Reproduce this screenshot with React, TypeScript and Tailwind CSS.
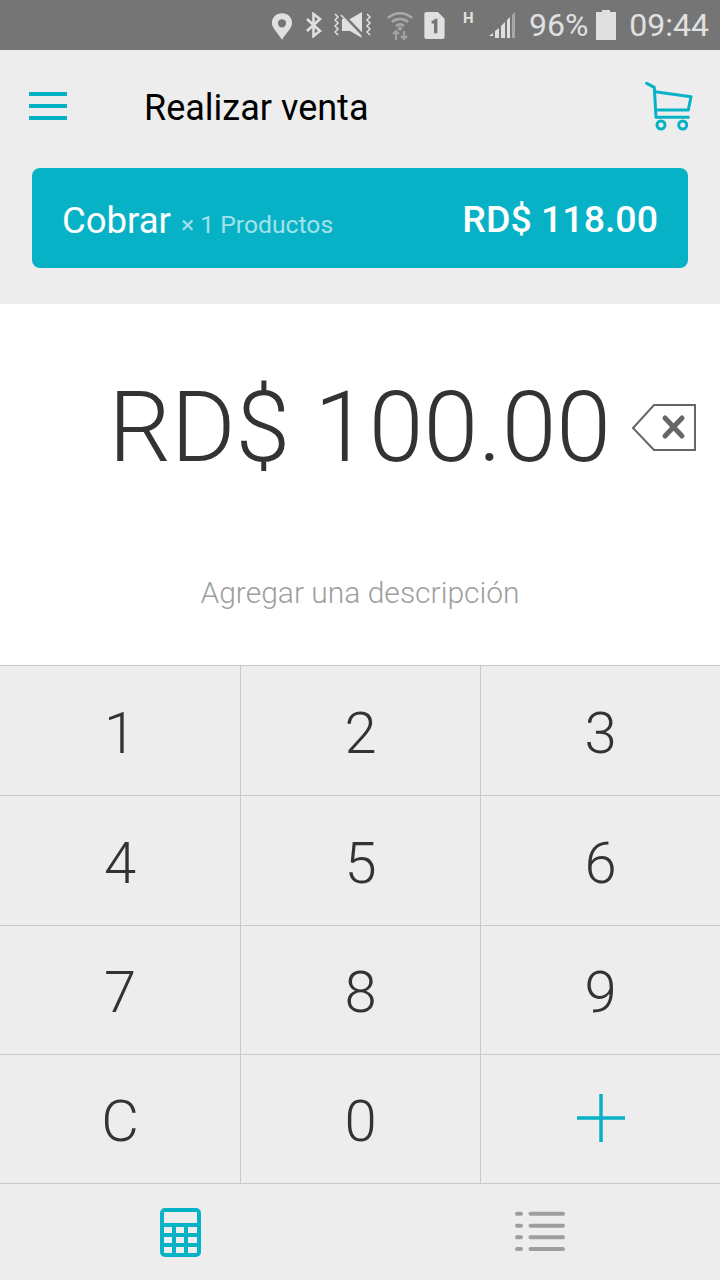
import React from "react";

const font = { fontFamily: "Roboto, sans-serif" };

function StatusIcons() {
  return (
    <>
      <svg width="22" height="28" viewBox="0 0 24 30" className="mr-[12px] mt-[2px]">
        <path fillRule="evenodd" fill="#e0e0e0" d="M12 1C5.800 1 1 5.600 1 11.500 1 18 8 23 12 30c4-7 11-12 11-18.500C23 5.600 18.200 1 12 1Zm0 6.500a4.500 4.500 0 1 1 0 9 4.500 4.500 0 0 1 0-9Z" />
      </svg>
      <svg width="18" height="26" viewBox="0 0 18 26" className="mr-[11px]" fill="none" stroke="#e0e0e0" strokeWidth="2.600">
        <path d="M2 7l13 12-6.500 5V2L15 7 2 19" />
      </svg>
      <svg width="40" height="28" viewBox="0 0 40 28" className="mr-[12px]">
        <path d="M8 8h8l12-7v26L16 20H8Z" fill="#e0e0e0" />
        <path d="M7 2l23 24" stroke="#757575" strokeWidth="3.500" />
        <path d="M7 4l20 21" stroke="#e0e0e0" strokeWidth="1.500" />
        <path d="M1 3l3 3-3 3 3 3-3 3 3 3-3 3 3 3M33 3l3 3-3 3 3 3-3 3 3 3-3 3 3 3" fill="none" stroke="#e0e0e0" strokeWidth="1.500" />
      </svg>
      <svg width="28" height="30" viewBox="0 0 28 30" className="mr-[9px]" fill="none">
        <path d="M2 8c7-6.500 17-6.500 24 0M6 12c4.500-4 11.500-4 16 0M10 16c2.500-2 5.500-2 8 0" stroke="#a8a8a8" strokeWidth="2.500" />
        <circle cx="14" cy="18.500" r="2" fill="#a8a8a8" />
        <path d="M10 30v-8M7 24l3-3 3 3M18 21v8M15 26l3 3 3-3" stroke="#a0a0a0" strokeWidth="2.200" />
      </svg>
      <svg width="22" height="27" viewBox="0 0 22 28" className="mr-[18px]">
        <path fillRule="evenodd" fill="#e0e0e0" d="M3 0h12l7 7v19a2 2 0 0 1-2 2H3a2 2 0 0 1-2-2V2a2 2 0 0 1 2-2Zm5.500 9v3h2.500v10h3.500V7h-2.500c-.5 1.300-1.500 2-3.500 2Z" />
      </svg>
      <span className="mr-[14px] -mt-[14px] w-[11px] text-center text-[15px] font-bold leading-none text-[#e0e0e0]">H</span>
      <svg width="28" height="26" viewBox="0 0 28 26" className="mr-[13px]">
        <path d="M1 24l4-3v3Z" fill="#e0e0e0" />
        <path d="M7 19l4-3v10H7Z" fill="#e0e0e0" />
        <path d="M13 14l4-4v16h-4Z" fill="#e0e0e0" />
        <path d="M19 8l3-3v21h-3Z" fill="#e0e0e0" />
        <path d="M24 3l3-3v26h-3Z" fill="#a8a8a8" />
      </svg>
    </>
  );
}

function KeyCell({ children, left, bottom }: { children: React.ReactNode; left?: boolean; bottom?: boolean }) {
  return (
    <div className={`flex items-center justify-center border-t border-[#c8c8c8] ${left ? "border-l" : ""} ${bottom ? "h-[129px]" : "h-[130px]"}`}>
      {children}
    </div>
  );
}

const rows = [
  ["1", "2", "3"],
  ["4", "5", "6"],
  ["7", "8", "9"],
  ["C", "0", "+"],
];

export default function App() {
  return (
    <div className="flex h-[1280px] w-[720px] flex-col overflow-hidden bg-[#ededed]" style={font}>
      <div className="flex h-[50px] items-center justify-end bg-[#757575] pr-[11px]">
        <StatusIcons />
        <span className="mr-[8px] text-[32px] leading-none text-[#e0e0e0]">96%</span>
        <svg width="20" height="30" viewBox="0 0 20 30" className="mr-[13px]">
          <path d="M6 0h8v2h6v28H0V2h6Z" fill="#e0e0e0" />
        </svg>
        <span className="text-[32px] leading-none text-[#e0e0e0]">09:44</span>
      </div>

      <div className="flex h-[118px] items-center pl-[29px] pr-[27px]">
        <svg width="38" height="28" viewBox="0 0 38 28" className="mr-[77px] mt-[-6px]">
          <path d="M0 2h38M0 14h38M0 26h38" stroke="#08b2c6" strokeWidth="4" />
        </svg>
        <span className="mt-[-3px] text-[36px] leading-none text-black">Realizar venta</span>
        <svg width="48" height="50" viewBox="0 0 48 50" className="ml-auto mt-[-6px]" fill="none" stroke="#08b2c6" strokeWidth="3" strokeLinecap="round" strokeLinejoin="round">
          <path d="M1.700 2.300l7.600 4 1.700 30h32.300" />
          <path d="M10 10.700l36 5-2.700 13.300H11.700" />
          <circle cx="16" cy="44" r="4" />
          <circle cx="37.700" cy="44" r="4" />
        </svg>
      </div>

      <div className="mx-[32px] flex h-[100px] items-center justify-between rounded-lg bg-[#08b2c6] pl-[30px] pr-[30px]">
        <div className="mt-[6px] flex items-baseline">
          <span className="text-[36.500px] leading-none text-white">Cobrar</span>
          <span className="ml-[10px] text-[24.700px] leading-none text-[#a3e2ea]">× 1 Productos</span>
        </div>
        <span className="mt-[4px] text-[37.500px] font-medium leading-none text-white">RD$ 118.00</span>
      </div>

      <div className="mt-[36px] flex h-[361px] flex-col bg-white">
        <div className="mt-[75px] flex h-[98px] items-center justify-end pr-[23px]">
          <span className="mr-[20px] text-[98.500px] font-light leading-[98px] text-[#333333]">RD$ 100.00</span>
          <svg width="66" height="50" viewBox="0 0 66 50" fill="none">
            <path d="M23 2h41v45H23L2 25Z" stroke="#666666" strokeWidth="2" />
            <path d="M34 15l17 18M51 15L34 33" stroke="#666666" strokeWidth="5" strokeLinecap="round" />
          </svg>
        </div>
        <div className="mt-[101px] text-center text-[30px] font-light leading-none text-[#9e9e9e]">Agregar una descripción</div>
      </div>

      <div className="grid grid-cols-3">
        {rows.flat().map((k, i) => (
          <KeyCell key={k} left={i % 3 !== 0} bottom={i > 5}>
            {k === "+" ? (
              <svg width="50" height="50" viewBox="0 0 50 50" className="mt-[-2px]">
                <path d="M25 1v48M1 25h48" stroke="#08b2c6" strokeWidth="3.500" />
              </svg>
            ) : (
              <span className="mt-[4px] text-[58px] font-light leading-none text-[#333333]">{k}</span>
            )}
          </KeyCell>
        ))}
      </div>

      <div className="flex flex-1 items-center border-t border-[#c8c8c8]">
        <div className="flex flex-1 justify-center">
          <svg width="42" height="50" viewBox="0 0 42 50" fill="none">
            <rect x="3" y="3" width="37" height="45" rx="3" stroke="#08b2c6" strokeWidth="4" />
            <path d="M3 18h37M3 28h37M3 38h37M15 18v30M27 18v30" stroke="#08b2c6" strokeWidth="4" />
          </svg>
        </div>
        <div className="flex flex-1 justify-center">
          <svg width="50" height="42" viewBox="0 0 50 42" fill="none" stroke="#9e9e9e" strokeWidth="4" strokeLinecap="round">
            <path d="M2 2.700h4M2 14.700h4M2 26.300h4M2 38h4M15.500 2.700H48M15.500 14.700H48M15.500 26.300H48M15.500 38H48" />
          </svg>
        </div>
      </div>
    </div>
  );
}
